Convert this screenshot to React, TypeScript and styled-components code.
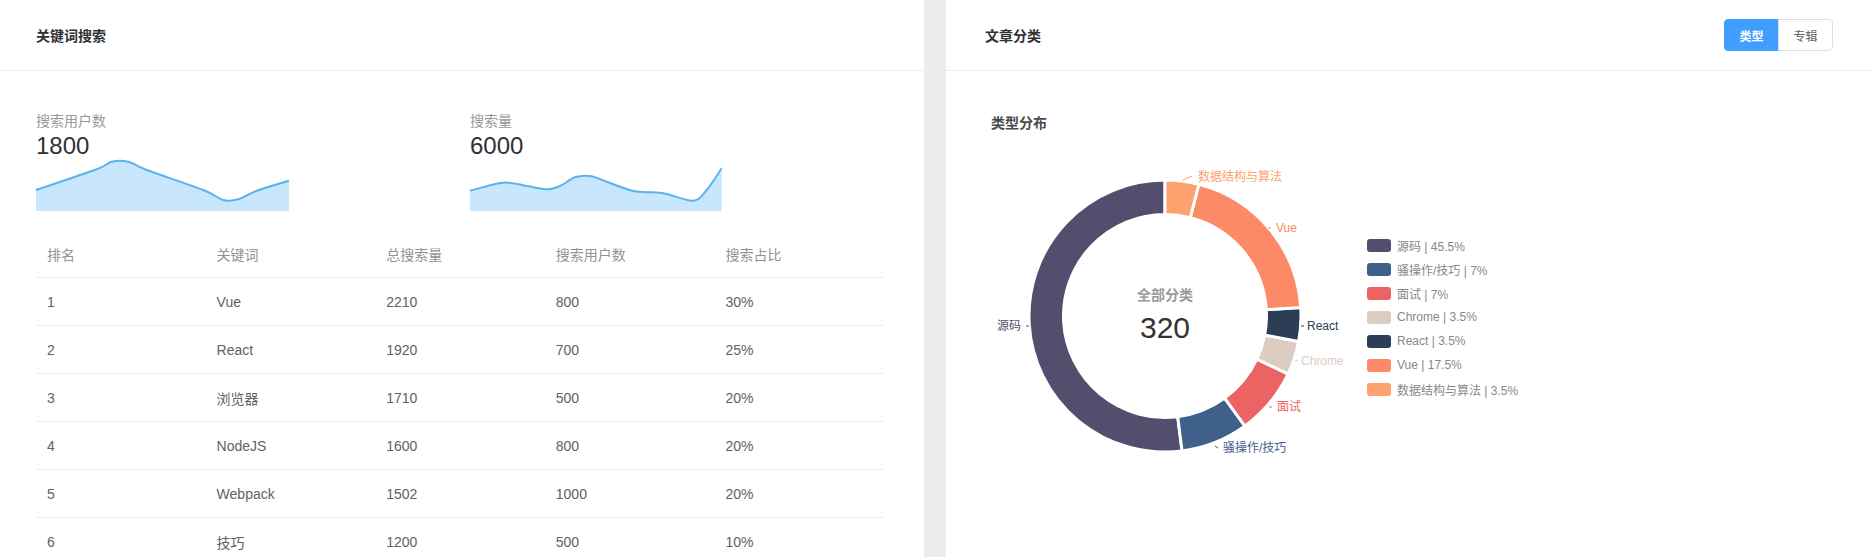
import React from 'react';
import styled, { createGlobalStyle } from 'styled-components';

const GlobalStyle = createGlobalStyle`
  *, *::before, *::after { box-sizing: border-box; }
  html, body { margin: 0; padding: 0; background: #ececec; }
  body { font-family: "Liberation Sans", "Noto Sans CJK SC", sans-serif; }
`;

const Page = styled.div`
  display: flex;
  gap: 22px;
  height: 557px;
  overflow: hidden;
  background: #ececec;
`;

const Card = styled.section<{ $width: number }>`
  width: ${(p) => p.$width}px;
  flex: none;
  background: #fff;
  display: flex;
  flex-direction: column;
`;

const CardHeader = styled.header<{ $pl: number; $pr: number }>`
  height: 71px;
  flex: none;
  border-bottom: 1px solid #ebeef5;
  display: flex;
  align-items: center;
  justify-content: space-between;
  padding: 0 ${(p) => p.$pr}px 0 ${(p) => p.$pl}px;
`;

const CardTitle = styled.h3`
  margin: 0;
  font-size: 14px;
  font-weight: 600;
  color: #303133;
`;

const Segmented = styled.div`
  display: flex;
`;

const SegButton = styled.button<{ $active: boolean; $first: boolean }>`
  width: 55px;
  height: 32px;
  padding: 0;
  font-family: inherit;
  font-size: 12px;
  font-weight: ${(p) => (p.$active ? 600 : 400)};
  cursor: pointer;
  border: 1px solid ${(p) => (p.$active ? '#409eff' : '#dcdfe6')};
  background: ${(p) => (p.$active ? '#409eff' : '#fff')};
  color: ${(p) => (p.$active ? '#fff' : '#606266')};
  border-radius: ${(p) => (p.$first ? '4px 0 0 4px' : '0 4px 4px 0')};
  margin-left: ${(p) => (p.$first ? '0' : '-1px')};
`;

const LeftBody = styled.div`
  padding: 39px 40px 0 36px;
`;

const Stats = styled.div`
  display: grid;
  grid-template-columns: 434px 1fr;
`;

const Stat = styled.div`
  display: flex;
  flex-direction: column;
`;

const StatLabel = styled.div`
  font-size: 14px;
  line-height: 22px;
  color: #999;
`;

const StatValue = styled.div`
  font-size: 24px;
  line-height: 28px;
  color: #303133;
`;

const Spark = styled.svg`
  display: block;
  overflow: visible;
`;

const Table = styled.div`
  margin-top: 19px;
`;

const Row = styled.div<{ $head?: boolean }>`
  display: grid;
  grid-template-columns: repeat(5, 1fr);
  height: 48px;
  align-items: center;
  border-bottom: 1px solid #ebeef5;
  font-size: 14px;
  color: ${(p) => (p.$head ? '#909399' : '#606266')};
`;

const Cell = styled.div`
  padding-left: 11px;
`;

const RightBody = styled.div`
  padding: 41px 0 0 45px;
`;

const SubTitle = styled.div`
  font-size: 14px;
  line-height: 22px;
  font-weight: 600;
  color: #4a4a4a;
`;

const ChartRow = styled.div`
  margin-top: 26px;
  display: flex;
  align-items: center;
  gap: 16px;
`;

const Donut = styled.svg`
  display: block;
  flex: none;
  overflow: visible;
`;

const Legend = styled.ul`
  list-style: none;
  margin: 0;
  padding: 4px 0 0;
`;

const LegendItem = styled.li`
  display: flex;
  align-items: center;
  gap: 6px;
  height: 24px;
  font-size: 12px;
  color: #888;
`;

const Swatch = styled.span<{ $color: string }>`
  width: 24px;
  height: 13px;
  border-radius: 3px;
  background: ${(p) => p.$color};
`;

type Pt = [number, number];

function smoothPath(pts: Pt[]): string {
  let d = `M${pts[0][0]},${pts[0][1]}`;
  for (let i = 0; i < pts.length - 1; i++) {
    const p0 = pts[i - 1] || pts[i];
    const p1 = pts[i];
    const p2 = pts[i + 1];
    const p3 = pts[i + 2] || p2;
    const c1x = p1[0] + (p2[0] - p0[0]) / 6;
    const c1y = p1[1] + (p2[1] - p0[1]) / 6;
    const c2x = p2[0] - (p3[0] - p1[0]) / 6;
    const c2y = p2[1] - (p3[1] - p1[1]) / 6;
    d += ` C${c1x.toFixed(2)},${c1y.toFixed(2)} ${c2x.toFixed(2)},${c2y.toFixed(2)} ${p2[0]},${p2[1]}`;
  }
  return d;
}

const Sparkline: React.FC<{ points: Pt[]; width: number; height: number }> = ({ points, width, height }) => {
  const line = smoothPath(points);
  const area = `${line} L${points[points.length - 1][0]},${height} L${points[0][0]},${height} Z`;
  return (
    <Spark width={width} height={height} viewBox={`0 0 ${width} ${height}`}>
      <path d={area} fill="#c8e6fc" />
      <path d={line} fill="none" stroke="#5cb1ef" strokeWidth={2} />
    </Spark>
  );
};

const spark1: Pt[] = [
  [0, 30], [60.7, 9.3], [75.7, 1.7], [92.3, 1.7], [110.7, 10], [167.3, 30],
  [187.3, 40], [202.3, 39.3], [220.7, 30.7], [253, 20.7],
];
const spark2: Pt[] = [
  [0, 30.7], [33.3, 22.7], [56.7, 26], [76.7, 29.3], [90, 26], [105, 17.3],
  [120, 16], [136.7, 21.7], [163.3, 31], [183.3, 32.3], [196.7, 34], [223.3, 40.7],
  [236.7, 30], [251.7, 8.3],
];

const rows = [
  ['1', 'Vue', '2210', '800', '30%'],
  ['2', 'React', '1920', '700', '25%'],
  ['3', '浏览器', '1710', '500', '20%'],
  ['4', 'NodeJS', '1600', '800', '20%'],
  ['5', 'Webpack', '1502', '1000', '20%'],
  ['6', '技巧', '1200', '500', '10%'],
];

const slices = [
  { name: '源码', value: 45.5, pct: '45.5%', color: '#524f6e' },
  { name: '骚操作/技巧', value: 7, pct: '7%', color: '#3f6189' },
  { name: '面试', value: 7, pct: '7%', color: '#eb6363' },
  { name: 'Chrome', value: 3.5, pct: '3.5%', color: '#dccdc3' },
  { name: 'React', value: 3.5, pct: '3.5%', color: '#2b3e56' },
  { name: 'Vue', value: 17.5, pct: '17.5%', color: '#fc8a66' },
  { name: '数据结构与算法', value: 3.5, pct: '3.5%', color: '#fda26f' },
];

const labels: { name: string; color: string; line: [number, number, number, number]; x: number; y: number; anchor?: 'start' | 'end' }[] = [
  { name: '数据结构与算法', color: '#fda26f', line: [192, 20, 201, 16], x: 207, y: 17 },
  { name: 'Vue', color: '#fc8a66', line: [277, 68, 280, 68], x: 285, y: 68 },
  { name: 'React', color: '#2b3e56', line: [310, 166, 313, 166], x: 316, y: 166 },
  { name: 'Chrome', color: '#dccdc3', line: [304, 201, 307, 200], x: 310, y: 201 },
  { name: '面试', color: '#eb6363', line: [278, 247, 281, 247], x: 286, y: 247 },
  { name: '骚操作/技巧', color: '#3f6189', line: [224, 286, 227, 288], x: 232, y: 288 },
  { name: '源码', color: '#524f6e', line: [35, 166, 38, 166], x: 30, y: 166, anchor: 'end' },
];

const CX = 174;
const CY = 156;
const R_OUT = 136;
const R_IN = 101.5;

function pointAt(deg: number, r: number): Pt {
  const a = (deg * Math.PI) / 180;
  return [CX - r * Math.sin(a), CY - r * Math.cos(a)];
}

function arcPath(a0: number, a1: number): string {
  const large = a1 - a0 > 180 ? 1 : 0;
  const o0 = pointAt(a0, R_OUT);
  const o1 = pointAt(a1, R_OUT);
  const i1 = pointAt(a1, R_IN);
  const i0 = pointAt(a0, R_IN);
  return `M${o0[0]},${o0[1]} A${R_OUT},${R_OUT} 0 ${large} 0 ${o1[0]},${o1[1]} L${i1[0]},${i1[1]} A${R_IN},${R_IN} 0 ${large} 1 ${i0[0]},${i0[1]} Z`;
}

const DonutChart: React.FC = () => {
  const total = slices.reduce((s, d) => s + d.value, 0);
  let acc = 0;
  const segs = slices.map((s) => {
    const a0 = acc;
    acc += (s.value / total) * 360;
    return { ...s, d: arcPath(a0, acc) };
  });
  return (
    <Donut width={360} height={310} viewBox="0 0 360 310" fontFamily='"Liberation Sans", "Noto Sans CJK SC", sans-serif'>
      {segs.map((s) => (
        <path key={s.name} d={s.d} fill={s.color} stroke="#fff" strokeWidth={3} strokeLinejoin="round" />
      ))}
      <text x={CX} y={135} textAnchor="middle" dominantBaseline="central" fontSize={14} fontWeight={600} fill="#999">
        全部分类
      </text>
      <text x={CX} y={167} textAnchor="middle" dominantBaseline="central" fontSize={30} fill="#333">
        320
      </text>
      {labels.map((l) => (
        <g key={l.name}>
          <line x1={l.line[0]} y1={l.line[1]} x2={l.line[2]} y2={l.line[3]} stroke={l.color} strokeWidth={1} />
          <text x={l.x} y={l.y} textAnchor={l.anchor || 'start'} dominantBaseline="central" fontSize={12} fill={l.color}>
            {l.name}
          </text>
        </g>
      ))}
    </Donut>
  );
};

export default function App() {
  const [mode, setMode] = React.useState<'type' | 'album'>('type');
  return (
    <>
      <GlobalStyle />
      <Page>
        <Card $width={924}>
          <CardHeader $pl={36} $pr={40}>
            <CardTitle>关键词搜索</CardTitle>
          </CardHeader>
          <LeftBody>
            <Stats>
              <Stat>
                <StatLabel>搜索用户数</StatLabel>
                <StatValue>1800</StatValue>
                <Sparkline points={spark1} width={253} height={51} />
              </Stat>
              <Stat>
                <StatLabel>搜索量</StatLabel>
                <StatValue>6000</StatValue>
                <Sparkline points={spark2} width={252} height={51} />
              </Stat>
            </Stats>
            <Table>
              <Row $head>
                <Cell>排名</Cell>
                <Cell>关键词</Cell>
                <Cell>总搜索量</Cell>
                <Cell>搜索用户数</Cell>
                <Cell>搜索占比</Cell>
              </Row>
              {rows.map((r) => (
                <Row key={r[0]}>
                  {r.map((c, i) => (
                    <Cell key={i}>{c}</Cell>
                  ))}
                </Row>
              ))}
            </Table>
          </LeftBody>
        </Card>
        <Card $width={928}>
          <CardHeader $pl={39} $pr={41}>
            <CardTitle>文章分类</CardTitle>
            <Segmented>
              <SegButton $first $active={mode === 'type'} onClick={() => setMode('type')}>
                类型
              </SegButton>
              <SegButton $first={false} $active={mode === 'album'} onClick={() => setMode('album')}>
                专辑
              </SegButton>
            </Segmented>
          </CardHeader>
          <RightBody>
            <SubTitle>类型分布</SubTitle>
            <ChartRow>
              <DonutChart />
              <Legend>
                {slices.map((s) => (
                  <LegendItem key={s.name}>
                    <Swatch $color={s.color} />
                    <span>
                      {s.name} | {s.pct}
                    </span>
                  </LegendItem>
                ))}
              </Legend>
            </ChartRow>
          </RightBody>
        </Card>
      </Page>
    </>
  );
}
